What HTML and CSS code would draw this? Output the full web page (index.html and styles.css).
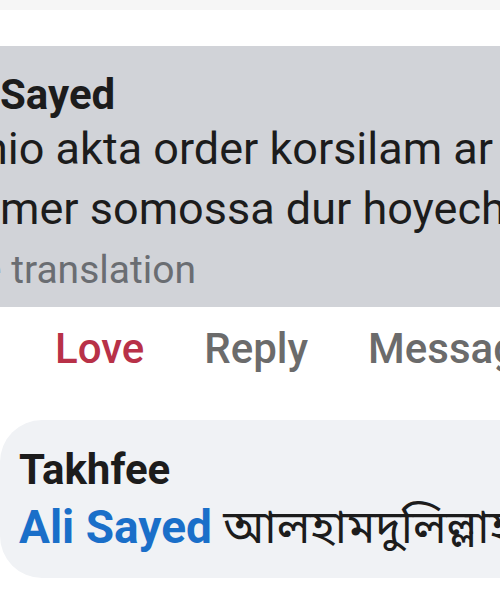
FILE: index.html
```html
<!DOCTYPE html>
<html lang="en">
<head>
    <meta charset="UTF-8">
    <meta name="viewport" content="width=device-width, initial-scale=1.0">
    <title>Comments</title>
    <link rel="stylesheet" href="styles.css">
</head>
<body>
    <div class="topbar"></div>

    <div class="comment">
        <div class="bubble gray">
            <div class="name">Sayed</div>
            <div class="line cut-1">nio akta order korsilam ar</div>
            <div class="line">mer somossa dur hoyeche</div>
            <div class="see cut-3">See translation</div>
        </div>
        <div class="actions">
            <span class="love">Love</span>
            <span>Reply</span>
            <span>Message</span>
        </div>
    </div>

    <div class="reply">
        <div class="bubble light">
            <div class="name">Takhfee</div>
            <div class="mention"><span class="tag">Ali Sayed</span> <span class="bn">আলহামদুলিল্লাহ</span></div>
        </div>
    </div>
</body>
</html>
```

FILE: styles.css
```css
body {
    margin: 0;
    background-color: #fff;
    font-family: Roboto, "Liberation Sans", sans-serif;
    color: #1c1c1c;
    overflow: hidden;
    height: 600px;
}

.topbar {
    height: 10px;
    background-color: #f6f6f6;
}

.comment {
    margin-top: 36px;
}

.bubble {
    white-space: nowrap;
    overflow: hidden;
}

.gray {
    background-color: #d1d3d8;
    height: 261px;
    padding-top: 26px;
    box-sizing: border-box;
}

.name {
    font-weight: bold;
    font-size: 42px;
    line-height: 46px;
}

.line {
    font-size: 45px;
    line-height: 58px;
    margin-top: 2px;
}

.cut-1 {
    margin-left: -17px;
}

.cut-3 {
    margin-left: -63px;
}

.see {
    font-size: 39px;
    line-height: 56px;
    margin-top: 4px;
    color: #6a6d72;
}

.actions {
    display: flex;
    gap: 60px;
    padding-left: 55px;
    padding-top: 17px;
    font-size: 42px;
    font-weight: 500;
    color: #6b6b6b;
    white-space: nowrap;
}

.love {
    color: #b83148;
}

.reply {
    margin-top: 47px;
}

.light {
    background-color: #f0f2f5;
    border-radius: 42px 0 0 42px;
    height: 158px;
    padding: 23px 0 0 19px;
    box-sizing: border-box;
}

.light .name {
    font-size: 42px;
    line-height: 54px;
}

.mention {
    font-size: 46px;
    line-height: 60px;
}

.tag {
    color: #1a6fc9;
    font-weight: bold;
}

.bn {
    font-family: "Noto Sans Bengali", "Noto Sans", sans-serif;
}
```
